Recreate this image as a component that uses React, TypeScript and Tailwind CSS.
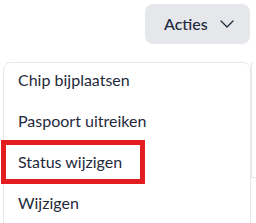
import { ChevronDown } from 'lucide-react';

const items = ['Chip bijplaatsen', 'Paspoort uitreiken', 'Status wijzigen', 'Wijzigen'];

export default function App() {
  return (
    <div
      className="relative h-[223px] w-[256px] overflow-hidden bg-white text-[#1f2a3c]"
      style={{ fontFamily: 'Lato, "Noto Sans", sans-serif' }}
    >
      {/* Header with actions button */}
      <div className="flex justify-end pr-[6px] pt-[4px]">
        <button className="flex h-[40px] w-[105px] items-center gap-[7px] rounded-lg bg-[#e5e7eb] pl-[19px] text-[16px] font-medium">
          <span>Acties</span>
          <ChevronDown size={24} strokeWidth={1.25} />
        </button>
      </div>

      {/* Page content behind the menu */}
      <div className="mt-[18px] ml-[251px] h-[116px] border-l border-b border-[#e5e7eb]" />

      {/* Dropdown */}
      <div className="absolute left-[3px] top-[62px] h-[170px] w-[248px] overflow-hidden rounded-lg border border-[#e5e7eb] bg-white">
        <div className="-mt-[4px]">
          {items.map((label) => (
            <div key={label} className="flex h-[41px] items-center pl-[14px] text-[16px]">
              {label}
            </div>
          ))}
        </div>
      </div>

      {/* Highlight */}
      <div className="absolute left-[1px] top-[140px] h-[44px] w-[144px] border-[5px] border-[#e31c1f]" />
    </div>
  );
}
